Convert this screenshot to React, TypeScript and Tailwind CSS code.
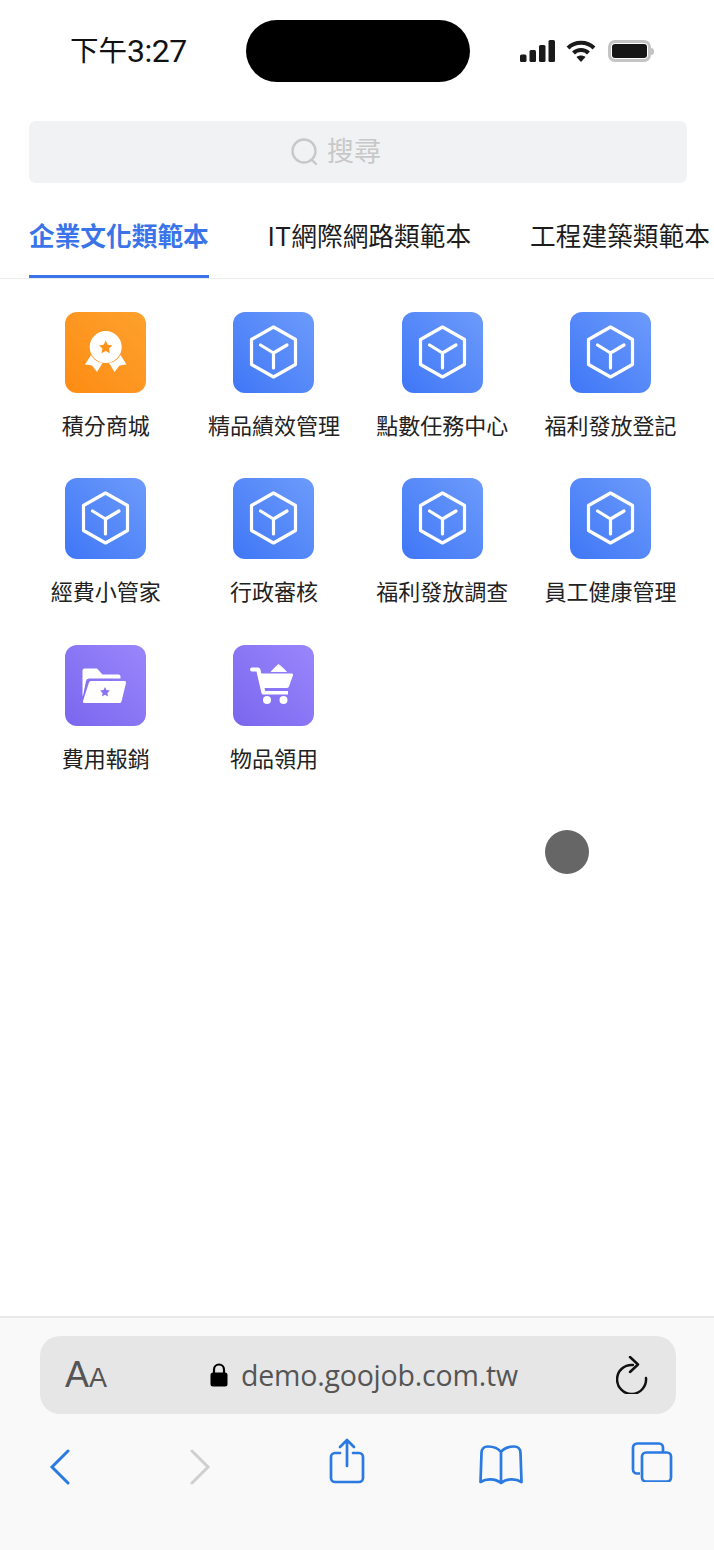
import { ReactNode } from "react";

const cjk = "font-['Inter','Noto_Sans_CJK_TC',sans-serif]";

function CubeIcon() {
  return (
    <svg width="81" height="81" viewBox="0 0 81 81" fill="none" stroke="#fff" strokeWidth="3.2" strokeLinejoin="round" strokeLinecap="round">
      <path d="M40.500 15 L62.500 27.500 V52.500 L40.500 65 L18.500 52.500 V27.500 Z" />
      <path d="M27.500 33 L40.500 41 L54 33 M40.500 41 V56" />
    </svg>
  );
}

function MedalIcon() {
  return (
    <svg width="81" height="81" viewBox="0 0 81 81" fill="#fff">
      <path d="M26 43 L20 52.500 L27 53.500 L32 60 L37.500 51 C32 50 28.500 47.500 26 43 Z" />
      <path d="M55.500 43 L61.500 52.500 L54.500 53.500 L49.500 60 L44 51 C49.500 50 53 47.500 55.500 43 Z" />
      <circle cx="40.700" cy="35" r="16" />
      <path fill="#fd931b" d="M40.700 28.500 l2 4.300 4.700.6-3.400 3.200.9 4.600-4.200-2.300-4.200 2.300.9-4.600-3.400-3.200 4.700-.6z" />
    </svg>
  );
}

function FolderIcon() {
  return (
    <svg width="81" height="81" viewBox="0 0 81 81" fill="#fff">
      <path d="M17.500 25.500 a2 2 0 0 1 2-2 h12.500 l5.500 6 h16 a2 2 0 0 1 2 2 v2 H24 a3 3 0 0 0-3 2.500 L18 51 a1 1 0 0 1-.5-1 z" />
      <path d="M24 37.500 a2 2 0 0 1 2-1.500 h33.500 a1.500 1.500 0 0 1 1.500 2 l-4.500 18.500 a2 2 0 0 1-2 1.500 H19.500 a1.500 1.500 0 0 1-1.500-2 z" />
      <path fill="#8674f1" d="M40 42 l1.500 3.100 3.400.5-2.500 2.400.6 3.400-3-1.600-3 1.600.6-3.400-2.500-2.400 3.400-.5z" />
    </svg>
  );
}

function CartIcon() {
  return (
    <svg width="81" height="81" viewBox="0 0 81 81" fill="#fff">
      <path d="M37.500 27 C40 24 43 21 45.500 19 C48.500 21 51.500 24 54 27 Z" />
      <path d="M19 22.500 h6 a2.500 2.500 0 0 1 2.400 1.800 l.9 4.200 H58.500 a1.500 1.500 0 0 1 1.400 2 L56 41.500 a2 2 0 0 1-1.900 1.400 H31.500 l.7 3 H55 v3.500 H30 a1.500 1.500 0 0 1-1.500-1.200 L23.500 26.500 H19 a2 2 0 0 1 0-4z" />
      <circle cx="34" cy="55" r="4" />
      <circle cx="50.500" cy="55" r="4" />
    </svg>
  );
}

const blue = "bg-gradient-to-tr from-[#3f76f6] to-[#6d9bfb]";
const purple = "bg-gradient-to-tr from-[#7a66ee] to-[#9a86fb]";
const orange = "bg-gradient-to-tr from-[#fd8c12] to-[#fda12c]";

const apps: { label: string; bg: string; icon: ReactNode }[] = [
  { label: "積分商城", bg: orange, icon: <MedalIcon /> },
  { label: "精品績效管理", bg: blue, icon: <CubeIcon /> },
  { label: "點數任務中心", bg: blue, icon: <CubeIcon /> },
  { label: "福利發放登記", bg: blue, icon: <CubeIcon /> },
  { label: "經費小管家", bg: blue, icon: <CubeIcon /> },
  { label: "行政審核", bg: blue, icon: <CubeIcon /> },
  { label: "福利發放調查", bg: blue, icon: <CubeIcon /> },
  { label: "員工健康管理", bg: blue, icon: <CubeIcon /> },
  { label: "費用報銷", bg: purple, icon: <FolderIcon /> },
  { label: "物品領用", bg: purple, icon: <CartIcon /> },
];

function StatusBar() {
  return (
    <div className="h-[121px] flex items-start pt-5">
      <div className="w-[246px] h-[62px] flex items-center pl-[70px] text-[#111]">
        <span className="text-[28.500px]">下午</span>
        <span className="font-['Roboto',sans-serif] text-[32px] tracking-[-0.5px]">3:27</span>
      </div>
      <div className="w-[224px] h-[62px] bg-black rounded-full" />
      <div className="flex-1 h-[62px] flex items-center pl-[50px]">
        <svg width="35" height="22" viewBox="0 0 35 22" fill="#1a1a1a">
          <rect x="0" y="14.500" width="6.500" height="7.500" rx="1.500" />
          <rect x="9.500" y="10" width="6.500" height="12" rx="1.500" />
          <rect x="19" y="5" width="6.500" height="17" rx="1.500" />
          <rect x="28.500" y="0" width="6.500" height="22" rx="1.500" />
        </svg>
        <svg width="30" height="22" viewBox="0 0 30 22" fill="none" stroke="#1a1a1a" strokeWidth="4" className="ml-[11px]">
          <path d="M2 8 C9 1 21 1 28 8" />
          <path d="M7.500 13 C11.500 9 18.500 9 22.500 13" />
          <path fill="#1a1a1a" stroke="none" d="M15 22 L10.500 17 C13 15 17 15 19.500 17 Z" />
        </svg>
        <div className="flex items-center ml-[12px]">
          <div className="w-[43px] h-[22px] border-[3px] border-[#c4c4c4] rounded-[7px] p-[1px]">
            <div className="w-full h-full bg-[#161616] rounded-[3px]" />
          </div>
          <div className="w-[3px] h-[7px] bg-[#c4c4c4] rounded-r-full" />
        </div>
      </div>
    </div>
  );
}

function Tabs() {
  return (
    <div className="h-[96px] flex gap-[59px] pl-[29px] border-b border-[#ececec] overflow-hidden whitespace-nowrap">
      <div className="h-[95px] pt-[38px] shrink-0 border-b-[3px] border-[#3a74e8]">
        <span className="text-[25.700px] leading-[32px] font-bold text-[#3a74e8]">企業文化類範本</span>
      </div>
      <div className="pt-[38px] shrink-0">
        <span className="text-[25.700px] leading-[32px] text-[#1c1c1c]">IT網際網路類範本</span>
      </div>
      <div className="pt-[38px] shrink-0">
        <span className="text-[25.700px] leading-[32px] text-[#1c1c1c]">工程建築類範本</span>
      </div>
    </div>
  );
}

function AppGrid() {
  return (
    <div className="grid grid-cols-4 w-[673.200px] ml-[21.550px] pt-[33px] gap-y-[34.900px]">
      {apps.map((app) => (
        <div key={app.label} className="flex flex-col items-center h-[131.500px]">
          <div className={`w-[81px] h-[81px] rounded-[12px] flex items-center justify-center ${app.bg}`}>
            {app.icon}
          </div>
          <span className="mt-[17px] text-[22px] leading-[32px] whitespace-nowrap text-[#222]">{app.label}</span>
        </div>
      ))}
    </div>
  );
}

function BrowserBar() {
  return (
    <div className="h-[234px] bg-[#f9f9f9] border-t-2 border-[#e9e9e9] pt-[18px]">
      <div className="ml-[40px] mr-[38px] h-[78px] bg-[#e6e6e6] rounded-[20px] flex items-center pl-[25px] pr-[28px]">
        <span className="font-['Liberation_Sans',sans-serif] text-[#555] w-[145px] flex items-baseline">
          <span className="text-[36px] leading-none">A</span>
          <span className="text-[27px] leading-none">A</span>
        </span>
        <svg width="18" height="24" viewBox="0 0 18 24" className="shrink-0">
          <path d="M4 10 V6.500 a5 5 0 0 1 10 0 V10" fill="none" stroke="#000" strokeWidth="2.200" />
          <rect x="0.500" y="9.500" width="17" height="14" rx="2.500" fill="#000" />
        </svg>
        <span className="ml-[13px] flex-1 font-['Open_Sans',sans-serif] text-[28.500px] leading-none text-[#555] tracking-[-0.200px]">
          demo.goojob.com.tw
        </span>
        <svg width="32" height="38" viewBox="0 0 32 38" fill="none" stroke="#111" strokeWidth="2.500" strokeLinecap="round" strokeLinejoin="round" className="shrink-0">
          <path d="M17 9 A14.500 14.500 0 1 0 30 22" />
          <path d="M14 1 L22 8.500 L14 16" />
        </svg>
      </div>
      <div className="h-[60px] mt-[24px] pl-[49px] flex items-start">
        <svg width="22" height="36" viewBox="0 0 22 36" fill="none" stroke="#2a7ae2" strokeWidth="3" strokeLinecap="round" className="shrink-0 mt-[11px]">
          <path d="M19 2 L3 18 L19 34" />
        </svg>
        <svg width="22" height="36" viewBox="0 0 22 36" fill="none" stroke="#cfcfcf" strokeWidth="3" strokeLinecap="round" className="shrink-0 mt-[11px] ml-[118px]">
          <path d="M3 2 L19 18 L3 34" />
        </svg>
        <svg width="36" height="46" viewBox="0 0 36 46" fill="none" stroke="#2a7ae2" strokeWidth="2.700" strokeLinecap="round" strokeLinejoin="round" className="shrink-0 ml-[118px]">
          <path d="M18 2 V28 M11 9 L18 2 L25 9" />
          <path d="M11 15 H6 a4 4 0 0 0-4 4 V40 a4 4 0 0 0 4 4 H30 a4 4 0 0 0 4-4 V19 a4 4 0 0 0-4-4 H24" />
        </svg>
        <svg width="46" height="40" viewBox="0 0 46 40" fill="none" stroke="#2a7ae2" strokeWidth="2.700" strokeLinecap="round" strokeLinejoin="round" className="shrink-0 ml-[113px] mt-[7px]">
          <path d="M23 7 C20 3 15 1.500 10 1.500 C6 1.500 3.500 4 3.500 8 L2.500 37 C8 33.500 17 33 23 38 C29 33 38 33.500 43.500 37 L42.500 8 C42.500 4 40 1.500 36 1.500 C31 1.500 26 3 23 7 Z M23 7 V38" />
        </svg>
        <svg width="42" height="40" viewBox="0 0 42 40" fill="none" stroke="#2a7ae2" strokeWidth="2.700" strokeLinejoin="round" className="shrink-0 ml-[107px] mt-[4px]">
          <path d="M9 31.500 H6 a4 4 0 0 1-4-4 V5.500 a4 4 0 0 1 4-4 H28 a4 4 0 0 1 4 4 V10" />
          <rect x="11" y="10.500" width="29" height="29" rx="4" />
        </svg>
      </div>
    </div>
  );
}

export default function App() {
  return (
    <div className={`relative w-[714px] h-[1550px] bg-white flex flex-col overflow-hidden ${cjk}`}>
      <StatusBar />
      <div className="ml-[29px] w-[658px] h-[62px] shrink-0 bg-[#f1f2f4] rounded-[7px] flex items-center justify-center gap-[9px] pr-[44px]">
        <svg width="27" height="28" viewBox="0 0 27 28" fill="none" stroke="#c8c8c8" strokeWidth="2.400" strokeLinecap="round">
          <circle cx="13" cy="13" r="11.500" />
          <path d="M21 22 L25 26" />
        </svg>
        <span className="text-[27px] text-[#c8c8c8]">搜尋</span>
      </div>
      <Tabs />
      <AppGrid />
      <div className="flex-1" />
      <BrowserBar />
      {/* floating assistive touch dot */}
      <div className="absolute left-[545px] top-[830px] w-[44px] h-[44px] rounded-full bg-[#666]" />
    </div>
  );
}
